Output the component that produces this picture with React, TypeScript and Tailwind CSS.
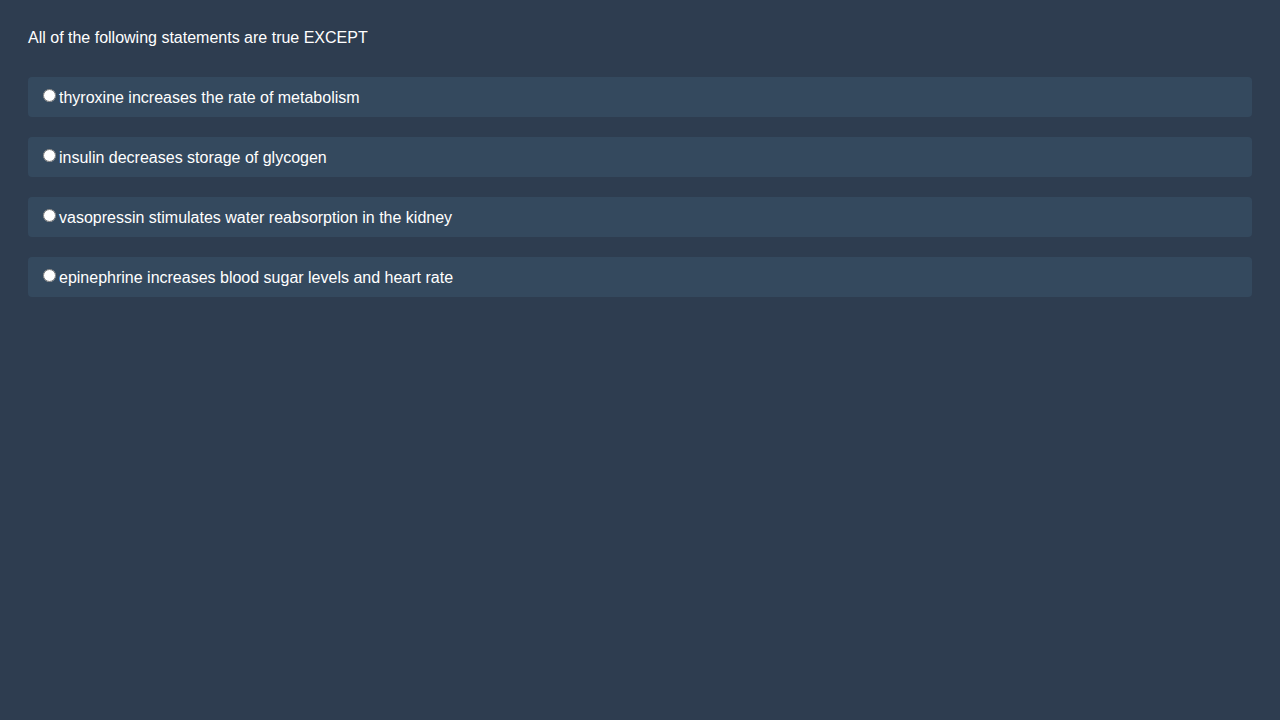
import React from "react";

const options = [
  "thyroxine increases the rate of metabolism",
  "insulin decreases storage of glycogen",
  "vasopressin stimulates water reabsorption in the kidney",
  "epinephrine increases blood sugar levels and heart rate",
];

export default function App() {
  return (
    <div
      className="min-h-screen w-full bg-[#2e3d50] px-7 pt-[29px] pb-7 text-white text-[16px]"
      style={{ fontFamily: '"Liberation Sans", Arial, sans-serif' }}
    >
      <div className="leading-[18px] mb-[30px]">All of the following statements are true EXCEPT</div>
      <div className="flex flex-col gap-5">
        {options.map((o, i) => (
          <label
            key={i}
            className="flex items-start rounded bg-[#34495e] pl-[10px] pt-[11px] pb-[9px] leading-5"
          >
            <input type="radio" name="q" className="ml-[5px] mr-[3px] mt-[1px] w-[13px] h-[13px]" />
            <span>{o}</span>
          </label>
        ))}
      </div>
    </div>
  );
}
